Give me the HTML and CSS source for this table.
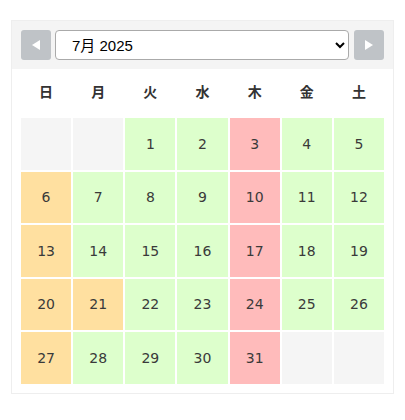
FILE: index.html
```html
<!DOCTYPE html>
<html lang="ja">
<head>
<meta charset="utf-8">
<link rel="stylesheet" href="styles.css">
</head>
<body>
<div class="cal">
  <div class="cal-head">
    <button class="nav" type="button" aria-label="前月">
      <svg width="10" height="12" viewBox="0 0 10 12"><polygon points="9,1 9,11 1,6" fill="#fff"/></svg>
    </button>
    <select class="month">
      <option>7月 2025</option>
    </select>
    <button class="nav" type="button" aria-label="翌月">
      <svg width="10" height="12" viewBox="0 0 10 12"><polygon points="1,1 1,11 9,6" fill="#fff"/></svg>
    </button>
  </div>
  <div class="cal-body">
    <table class="grid">
      <thead>
        <tr><th>日</th><th>月</th><th>火</th><th>水</th><th>木</th><th>金</th><th>土</th></tr>
      </thead>
      <tbody>
        <tr><td class="e"></td><td class="e"></td><td class="g">1</td><td class="g">2</td><td class="r">3</td><td class="g">4</td><td class="g">5</td></tr>
        <tr><td class="o">6</td><td class="g">7</td><td class="g">8</td><td class="g">9</td><td class="r">10</td><td class="g">11</td><td class="g">12</td></tr>
        <tr><td class="o">13</td><td class="g">14</td><td class="g">15</td><td class="g">16</td><td class="r">17</td><td class="g">18</td><td class="g">19</td></tr>
        <tr><td class="o">20</td><td class="o">21</td><td class="g">22</td><td class="g">23</td><td class="r">24</td><td class="g">25</td><td class="g">26</td></tr>
        <tr><td class="o">27</td><td class="g">28</td><td class="g">29</td><td class="g">30</td><td class="r">31</td><td class="e"></td><td class="e"></td></tr>
      </tbody>
    </table>
  </div>
</div>
</body>
</html>
```

FILE: styles.css
```css
html, body {
  margin: 0;
  padding: 0;
  background: #fff;
}
body {
  font-family: "DejaVu Sans", Verdana, sans-serif;
  color: #333;
}
.cal {
  margin: 20px 11px;
  width: 381px;
  border: 1px solid #eee;
}
.cal-head {
  background: #f4f4f4;
  padding: 9px 9px;
  display: flex;
  align-items: center;
  gap: 4px;
}
.nav {
  width: 30px;
  height: 30px;
  flex: none;
  border: none;
  border-radius: 3px;
  background: #bfc3c7;
  padding: 0;
  display: flex;
  align-items: center;
  justify-content: center;
  cursor: pointer;
}
.nav:last-child {
  margin-left: 1px;
}
.month {
  flex: 1;
  height: 30px;
  border: 1px solid #aaa;
  border-radius: 4px;
  background: #fff;
  font-family: "Liberation Sans", Arial, "Noto Sans CJK JP", sans-serif;
  font-size: 15px;
  color: #000;
  padding: 0 8px 0 12px;
}
.cal-body {
  padding: 0 7px 7px;
}
.grid {
  width: 100%;
  border-spacing: 2px;
  table-layout: fixed;
}
.grid th {
  height: 40px;
  padding: 0 0 5px;
  font-family: "Noto Sans CJK JP", sans-serif;
  font-size: 14px;
  font-weight: bold;
  color: #333;
  text-align: center;
}
.grid td {
  height: 51.5px;
  padding: 0;
  text-align: center;
  font-size: 14px;
  color: #3a3a3a;
}
.grid td.e { background: #f5f5f5; }
.grid td.g { background: #ddffcc; }
.grid td.r { background: #ffbbbb; }
.grid td.o { background: #ffe0a0; }
```
